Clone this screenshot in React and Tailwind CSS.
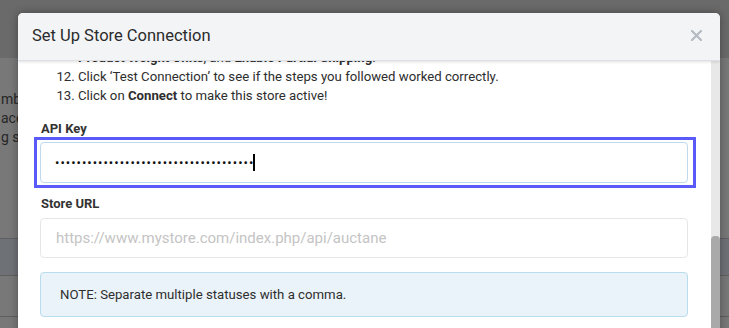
import React from "react";

export default function App() {
  return (
    <div
      className="relative w-[729px] h-[328px] overflow-hidden bg-[#6b6b6b]"
      style={{ fontFamily: "Roboto, 'Liberation Sans', Arial, sans-serif" }}
    >
      {/* background page (dimmed) */}
      <div className="flex flex-col w-[729px] h-[328px]">
        <div className="h-[58px] bg-[#6a6a6a]" />
        <div className="flex-1 bg-[#787878] text-[#262626] text-[14px] leading-[19px]">
          <div className="h-[32px]" />
          <div className="pl-[1px] whitespace-nowrap">mbe</div>
          <div className="pl-[1px] whitespace-nowrap">ace</div>
          <div className="pl-[1px] whitespace-nowrap">g s</div>
          <div className="h-[91px]" />
          <div className="h-[37px] border-t border-[#5f5f5f] bg-[#6e7176]" />
          <div className="h-[41px] border-t border-[#5f5f5f]" />
          <div className="border-t border-[#5f5f5f]" />
        </div>
      </div>

      {/* modal */}
      <div className="absolute left-[18px] top-[13px] w-[702px] h-[330px] bg-white rounded-t-[5px] shadow-[0_0_8px_rgba(0,0,0,0.35)] flex flex-col overflow-hidden">
        <div className="relative z-10 h-[48px] shrink-0 bg-[#f3f4f6] border-b border-[#dcdfe3] shadow-[0_1px_3px_rgba(0,0,0,0.12)] flex items-center justify-between pl-[14px] pr-[18px]">
          <div className="text-[16.5px] text-[#2b2b2b]">Set Up Store Connection</div>
          <svg width="11" height="11" viewBox="0 0 11 11" className="mt-[-2px]">
            <path d="M1 1 L10 10 M10 1 L1 10" stroke="#b3bac2" strokeWidth="2.2" strokeLinecap="round" />
          </svg>
        </div>
        <div className="flex flex-1 min-h-0">
          <div className="flex-1 overflow-hidden pl-[22px] pr-[23px]">
            <ol className="list-decimal pl-[38px] -mt-[13px] text-[13.2px] leading-[19px] text-[#2e2e2e]">
              <li className="list-none">
                <b>Product Weight Units</b>, and <b>Enable Partial Shipping</b>.
              </li>
              <li value={12}>Click ‘Test Connection’ to see if the steps you followed worked correctly.</li>
              <li value={13}>
                Click on <b>Connect</b> to make this store active!
              </li>
            </ol>

            <div className="mt-[16px] text-[13px] font-bold text-[#333] leading-[16px] pl-[1px]">API Key</div>
            <div className="-ml-[6px] -mr-[8px] border-[3px] border-[#5a5af8] pl-[3px] pr-[5px] py-[2px]">
              <div className="h-[41px] border border-[#bcd9ee] rounded-[4px] flex items-center pl-[14px]">
                <span className="text-[#111] text-[13px] tracking-[1px] leading-none">
                  {"•".repeat(37)}
                </span>
                <span className="-ml-[1px] w-[1.5px] h-[17px] bg-black" />
              </div>
            </div>

            <div className="mt-[8px] text-[13px] font-bold text-[#333] leading-[16px] pl-[1px]">Store URL</div>
            <div className="mt-[6px] h-[40px] border border-[#e6e6e6] rounded-[4px] flex items-center pl-[15px] text-[15px] text-[#c4c4c4]">
              https://www.mystore.com/index.php/api/auctane
            </div>

            <div className="mt-[14px] h-[45px] border border-[#b9dcec] bg-[#eaf3f9] rounded-[4px] flex items-center pl-[19px] text-[13.2px] text-[#2e2e2e]">
              NOTE: Separate multiple statuses with a comma.
            </div>
          </div>
          <div className="w-[9px] bg-[#e8e8e8] flex flex-col">
            <div className="h-[175px]" />
            <div className="flex-1 bg-[#a9a9a9] rounded-t-[4px]" />
          </div>
        </div>
      </div>
    </div>
  );
}
